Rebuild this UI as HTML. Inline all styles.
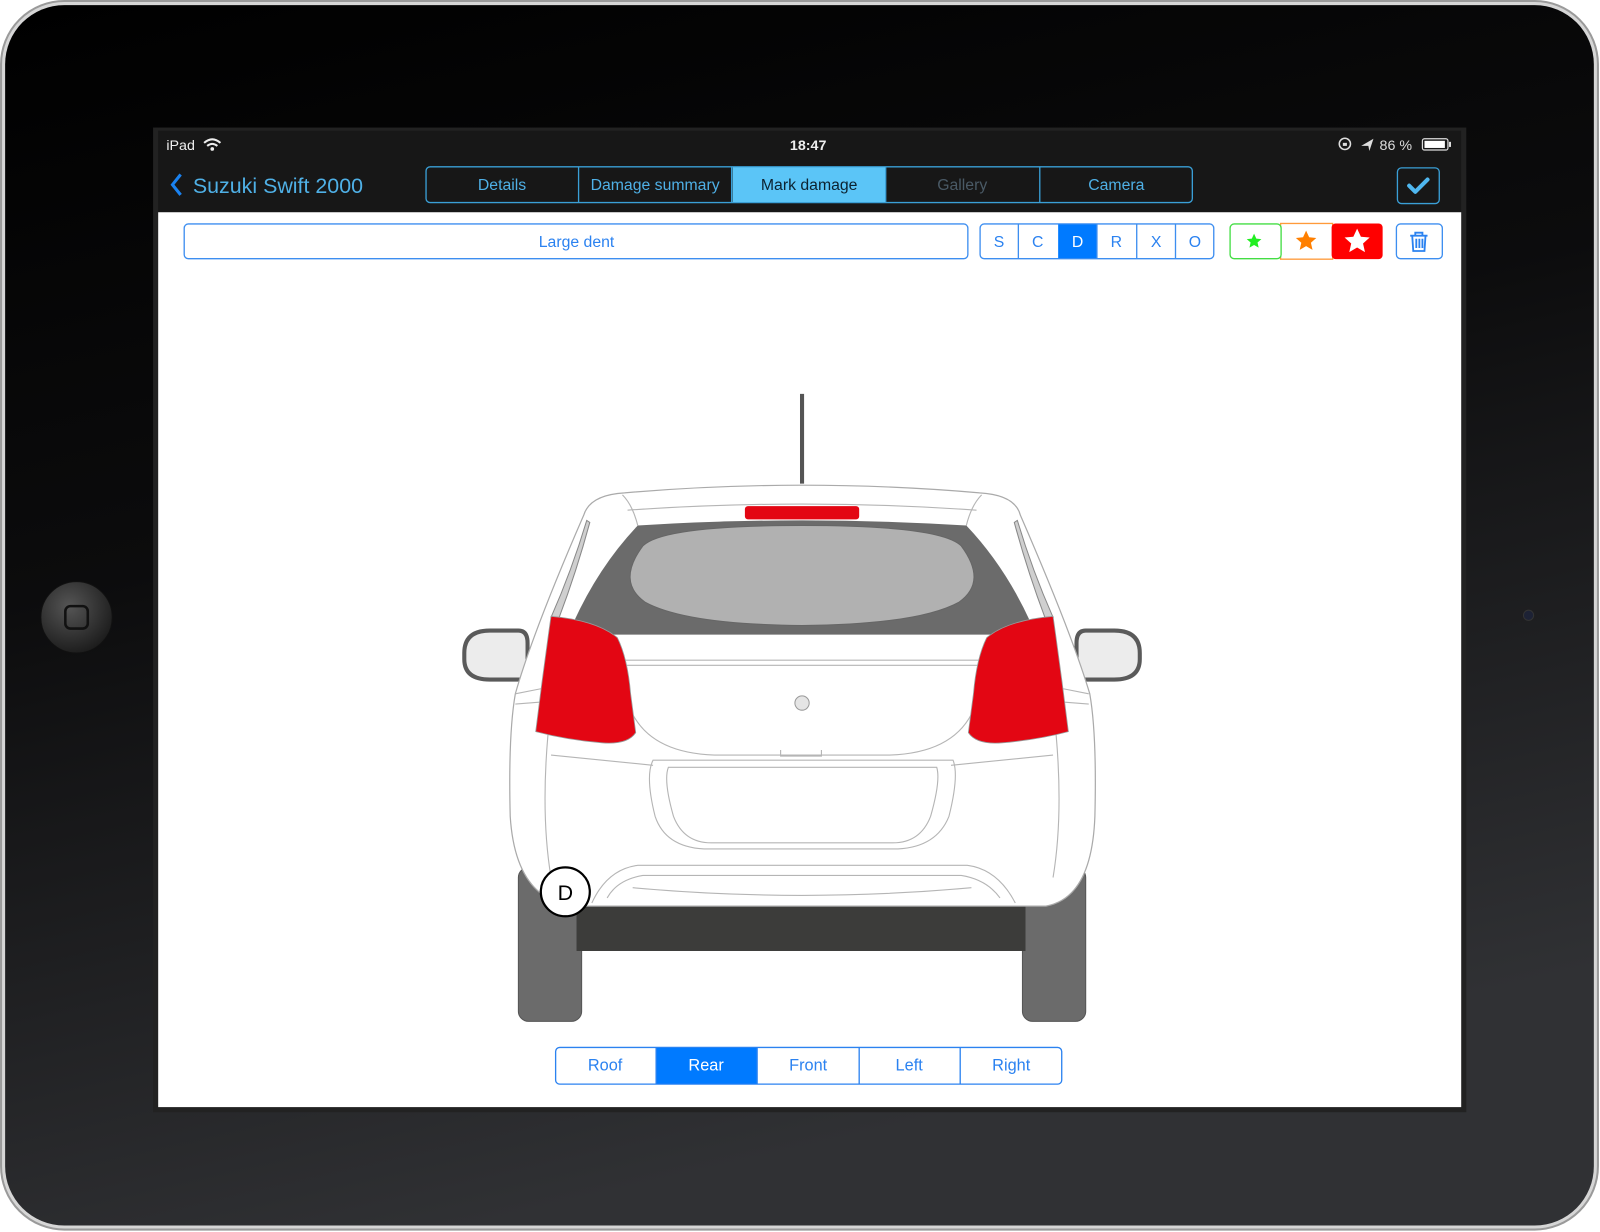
<!DOCTYPE html>
<html><head><meta charset="utf-8"><style>
html,body{margin:0;padding:0;background:#fff;width:1600px;height:1232px;overflow:hidden}
svg{display:block}
text{font-family:"Liberation Sans",sans-serif}
</style></head><body>
<svg width="1600" height="1232" viewBox="0 0 1568 1207.4" xmlns="http://www.w3.org/2000/svg">
<defs>
<linearGradient id="bez" x1="0" y1="0" x2="0.3" y2="1">
<stop offset="0" stop-color="#000"/><stop offset="0.45" stop-color="#0c0c0d"/><stop offset="1" stop-color="#303134"/>
</linearGradient>
<radialGradient id="hb" cx="0.4" cy="0.35" r="0.7"><stop offset="0" stop-color="#555"/><stop offset="1" stop-color="#1a1a1a"/></radialGradient>
</defs>
<rect x="1" y="1" width="1565" height="1204" rx="62" fill="#d6d6d6" stroke="#9a9a9a" stroke-width="2"/>
<rect x="5" y="5" width="1557" height="1196" rx="58" fill="url(#bez)"/>
<!-- screen -->
<rect x="150" y="125" width="1287" height="965" fill="#222"/>
<rect x="155" y="128" width="1277" height="80" fill="#171717"/>
<rect x="155" y="208" width="1277" height="877" fill="#fff"/>
<!-- home button -->
<circle cx="75" cy="605" r="35" fill="url(#hb)" stroke="#111" stroke-width="1"/>
<rect x="64" y="594" width="22" height="22" rx="5" fill="none" stroke="#111" stroke-width="2.5"/>
<circle cx="1498" cy="603" r="5" fill="#1d2235" stroke="#333"/>
<!-- status bar -->
<text x="163" y="147" font-size="14" fill="#eee">iPad</text>
<path d="M200 140 q8-7 16 0 M203 143 q5-4 10 0" stroke="#eee" stroke-width="2" fill="none"/>
<circle cx="208" cy="146" r="1.8" fill="#eee"/>
<text x="792" y="147" font-size="14" fill="#eee" text-anchor="middle" font-weight="bold">18:47</text>
<circle cx="1318" cy="141" r="5.5" fill="none" stroke="#ddd" stroke-width="1.5"/>
<rect x="1316" y="140" width="4" height="3" fill="#ddd"/>
<path d="M1334 143 l12-7 -4 12 -1-5z" fill="#ddd"/>
<text x="1352" y="147" font-size="14" fill="#ddd">86 %</text>
<rect x="1394" y="136" width="25" height="11" rx="2" fill="none" stroke="#ddd" stroke-width="1.2"/>
<rect x="1396" y="138" width="20" height="7" fill="#fff"/>
<rect x="1420" y="139" width="2" height="5" fill="#ddd"/>
<!-- nav -->
<path d="M177 171 l-8 10 8 10" stroke="#1a82f0" stroke-width="3" fill="none"/>
<text x="189" y="189" font-size="21" fill="#4fb0e6">Suzuki Swift 2000</text>
<rect x="417.5" y="163.5" width="751" height="35" rx="4" fill="none" stroke="#3a9fd6" stroke-width="1.3"/>
<rect x="718" y="164" width="150" height="34" fill="#5bc5f7"/>
<g stroke="#3a9fd6" stroke-width="1.3"><line x1="567" y1="164" x2="567" y2="198"/><line x1="717" y1="164" x2="717" y2="198"/><line x1="868" y1="164" x2="868" y2="198"/><line x1="1019" y1="164" x2="1019" y2="198"/></g>
<g font-size="15.5" text-anchor="middle">
<text x="492" y="186" fill="#4fb0e6">Details</text>
<text x="642" y="186" fill="#4fb0e6">Damage summary</text>
<text x="793" y="186" fill="#0c2230">Mark damage</text>
<text x="943" y="186" fill="#4a5a66">Gallery</text>
<text x="1094" y="186" fill="#4fb0e6">Camera</text>
</g>
<rect x="1369.5" y="164.5" width="41" height="35" rx="4" fill="none" stroke="#3a9fd6" stroke-width="1.3"/>
<path d="M1381 182 l6 6 12-12" stroke="#4fb7ef" stroke-width="4" fill="none" stroke-linecap="round" stroke-linejoin="round"/>
<!-- toolbar -->
<rect x="180.5" y="219.5" width="768" height="34" rx="4" fill="#fff" stroke="#3d8ef0" stroke-width="1.3"/>
<text x="565" y="242" font-size="15.5" fill="#2b82f0" text-anchor="middle">Large dent</text>
<rect x="960.5" y="219.5" width="229" height="34" rx="4" fill="#fff" stroke="#3d8ef0" stroke-width="1.3"/>
<rect x="1037" y="220" width="38" height="33" fill="#007aff"/>
<g stroke="#3d8ef0" stroke-width="1.3"><line x1="998" y1="220" x2="998" y2="253"/><line x1="1075" y1="220" x2="1075" y2="253"/><line x1="1114" y1="220" x2="1114" y2="253"/><line x1="1152" y1="220" x2="1152" y2="253"/></g>
<g font-size="15.5" text-anchor="middle" fill="#2b82f0">
<text x="979" y="242">S</text><text x="1017" y="242">C</text><text x="1056" y="242" fill="#fff">D</text><text x="1094" y="242">R</text><text x="1133" y="242">X</text><text x="1171" y="242">O</text>
</g>
<rect x="1255" y="219" width="51" height="35" fill="#fff" stroke="#ff9a3a" stroke-width="1.3"/>
<rect x="1305" y="219" width="50" height="35" rx="4" fill="#ff0000"/>
<rect x="1205.5" y="219.5" width="50" height="34" rx="4" fill="#fff" stroke="#44dd44" stroke-width="1.3"/>
<path d="M1229 229 l2.2 4.8 5 .5 -3.8 3.4 1.1 5 -4.5-2.6 -4.5 2.6 1.1-5 -3.8-3.4 5-.5z" fill="#22ee22"/>
<path d="M1280 226 l3 6.5 7 .7 -5.3 4.7 1.6 7 -6.3-3.7 -6.3 3.7 1.6-7 -5.3-4.7 7-.7z" fill="#ff7f00"/>
<path d="M1330 224 l3.7 8 8.6 .8 -6.5 5.8 1.9 8.5 -7.7-4.5 -7.7 4.5 1.9-8.5 -6.5-5.8 8.6-.8z" fill="#fff"/>
<rect x="1368.5" y="219.5" width="45" height="34" rx="4" fill="#fff" stroke="#3d8ef0" stroke-width="1.3"/>
<g stroke="#2b82f0" stroke-width="1.8" fill="none"><path d="M1382 231 h17 M1387 231 v-3 h7 v3 M1384 231 l1 15 h11 l1-15 M1388 234 v9 M1391 234 v9 M1394 234 v9"/></g>
<!-- car -->
<line x1="786" y1="386" x2="786" y2="474" stroke="#555" stroke-width="4"/>
<rect x="508" y="850" width="62" height="151" rx="10" fill="#6b6b6b" stroke="#555"/>
<rect x="1002" y="850" width="62" height="151" rx="10" fill="#6b6b6b" stroke="#555"/>
<rect x="565" y="880" width="440" height="52" fill="#3c3c3a"/>
<path d="M455 640 q0-22 25-22 h28 q9 0 9 12 v30 q0 6-9 6 h-28 q-25 0-25-20z" fill="#ececec" stroke="#5a5a5a" stroke-width="4"/>
<path d="M1117 640 q0-22 -25-22 h-28 q-9 0-9 12 v30 q0 6 9 6 h28 q25 0 25-20z" fill="#ececec" stroke="#5a5a5a" stroke-width="4"/>
<path d="M612 483 Q786 468 960 483 Q995 485 1000 505 Q1050 620 1068 680 Q1075 720 1073 800 Q1070 880 1025 888 L560 888 Q505 880 500 800 Q498 720 505 680 Q522 620 572 505 Q578 485 612 483z" fill="#fff" stroke="#aaa" stroke-width="1.2"/>
<g fill="none" stroke="#b5b5b5" stroke-width="1.1">
<path d="M610 485 Q620 495 625 515 M962 485 Q952 495 947 515"/>
<path d="M615 500 Q786 488 957 500"/>
<path d="M612 647 H960 M612 652 H960"/>
<path d="M620 700 Q640 738 700 740 H872 Q932 738 952 700"/>
<path d="M540 740 Q600 746 640 750 M1032 740 Q972 746 932 750"/>
<path d="M537 720 Q530 800 540 860 M1035 720 Q1042 800 1032 860"/>
<path d="M505 680 L530 675 M1067 680 L1042 675 M505 690 L530 688 M1067 690 L1042 688"/>
<path d="M640 745 H934 Q940 760 930 800 Q918 830 880 832 H690 Q652 830 642 800 Q632 760 640 745z"/>
<path d="M655 752 H918 Q922 765 912 800 Q902 826 875 826 H697 Q670 826 660 800 Q650 765 655 752z"/>
<path d="M765 735 v6 h40 v-6"/>
<path d="M580 885 Q595 852 625 848 H948 Q978 852 995 885"/>
<path d="M595 880 Q605 862 630 858 H942 Q967 862 980 880"/>
<path d="M620 870 Q786 885 952 870"/>
</g>
<path d="M575 510 Q560 560 540 605 L548 605 Q565 560 578 512z" fill="#cfcfcf" stroke="#888"/>
<path d="M997 510 Q1012 560 1032 605 L1024 605 Q1007 560 994 512z" fill="#cfcfcf" stroke="#888"/>
<path d="M625 515 Q786 505 947 515 Q985 555 1010 610 L1010 622 H562 L562 610 Q587 555 625 515z" fill="#6b6b6b"/>
<path d="M630 535 Q650 515 786 515 Q922 515 942 535 Q968 570 940 590 Q900 612 786 613 Q672 612 632 590 Q604 570 630 535z" fill="#b1b1b1" stroke="#666"/>
<rect x="730" y="496" width="112" height="13" rx="3" fill="#e30613"/>
<path d="M540 604 Q585 608 605 625 Q615 645 618 680 L623 718 Q615 730 590 728 Q555 725 525 717 Q532 660 540 604z" fill="#e30613" stroke="#999" stroke-width="0.8"/>
<path d="M1032 604 Q987 608 967 625 Q957 645 954 680 L949 718 Q957 730 982 728 Q1017 725 1047 717 Q1040 660 1032 604z" fill="#e30613" stroke="#999" stroke-width="0.8"/>
<circle cx="786" cy="689" r="7" fill="#e5e5e5" stroke="#999"/>
<circle cx="554" cy="874" r="24" fill="#fff" stroke="#000" stroke-width="2.2"/>
<text x="554" y="882" font-size="21" text-anchor="middle" fill="#000">D</text>
<!-- bottom segments -->
<rect x="544.5" y="1026.5" width="496" height="36" rx="4" fill="#fff" stroke="#2b82f0" stroke-width="1.3"/>
<rect x="643" y="1027" width="99" height="35" fill="#007aff"/>
<g stroke="#2b82f0" stroke-width="1.3"><line x1="643" y1="1027" x2="643" y2="1062"/><line x1="742" y1="1027" x2="742" y2="1062"/><line x1="842" y1="1027" x2="842" y2="1062"/><line x1="941" y1="1027" x2="941" y2="1062"/></g>
<g font-size="16" text-anchor="middle" fill="#2b82f0">
<text x="593" y="1049">Roof</text><text x="692" y="1049" fill="#fff">Rear</text><text x="792" y="1049">Front</text><text x="891" y="1049">Left</text><text x="991" y="1049">Right</text>
</g>
</svg>
</body></html>
